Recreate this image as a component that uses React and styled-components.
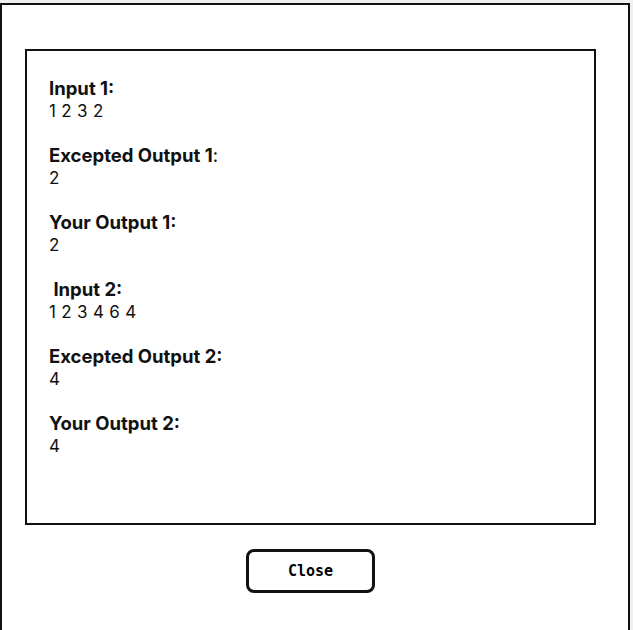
import React from "react";
import styled, { createGlobalStyle } from "styled-components";

const Global = createGlobalStyle`
  body {
    margin: 0;
    background: #f0f0f0;
    font-family: Inter, "Liberation Sans", sans-serif;
    color: #111;
  }
`;

const Page = styled.div`
  padding-top: 3px;
  height: 627px;
  overflow: hidden;
`;

const Modal = styled.div`
  width: 626px;
  height: 700px;
  background: #fff;
  border: 2px solid #111;
  display: flex;
  flex-direction: column;
  align-items: flex-start;
`;

const Results = styled.div`
  box-sizing: border-box;
  width: 571px;
  height: 476px;
  margin: 44px 0 0 23px;
  padding: 26px 22px;
  border: 2px solid #111;
  display: flex;
  flex-direction: column;
  gap: 22px;
`;

const Case = styled.div`
  display: flex;
  flex-direction: column;
`;

const Label = styled.div`
  font-size: 18.5px;
  line-height: 23px;
  font-weight: 700;
  white-space: pre;
  span {
    font-weight: 400;
  }
`;

const Value = styled.div`
  font-size: 17px;
  line-height: 22px;
  letter-spacing: 0.3px;
  white-space: pre;
`;

const Footer = styled.div`
  width: 571px;
  margin-left: 23px;
  padding-top: 24px;
  display: flex;
  justify-content: center;
`;

const CloseButton = styled.button`
  width: 129px;
  height: 44px;
  background: #fff;
  border: 3px solid #111;
  border-radius: 8px;
  font-family: "DejaVu Sans Mono", "Liberation Mono", monospace;
  font-size: 15px;
  font-weight: 600;
  color: #000;
  cursor: pointer;
`;

const cases = [
  { label: "Input 1:", value: "1 2 3 2" },
  { label: "Excepted Output 1", colon: true, value: "2" },
  { label: "Your Output 1:", value: "2" },
  { label: " Input 2:", value: "1 2 3 4 6 4" },
  { label: "Excepted Output 2:", value: "4" },
  { label: "Your Output 2:", value: "4" },
];

export default function App() {
  return (
    <>
      <Global />
      <Page>
        <Modal>
          <Results>
            {cases.map((c, i) => (
              <Case key={i}>
                <Label>
                  {c.label}
                  {c.colon && <span>:</span>}
                </Label>
                <Value>{c.value}</Value>
              </Case>
            ))}
          </Results>
          <Footer>
            <CloseButton>Close</CloseButton>
          </Footer>
        </Modal>
      </Page>
    </>
  );
}
